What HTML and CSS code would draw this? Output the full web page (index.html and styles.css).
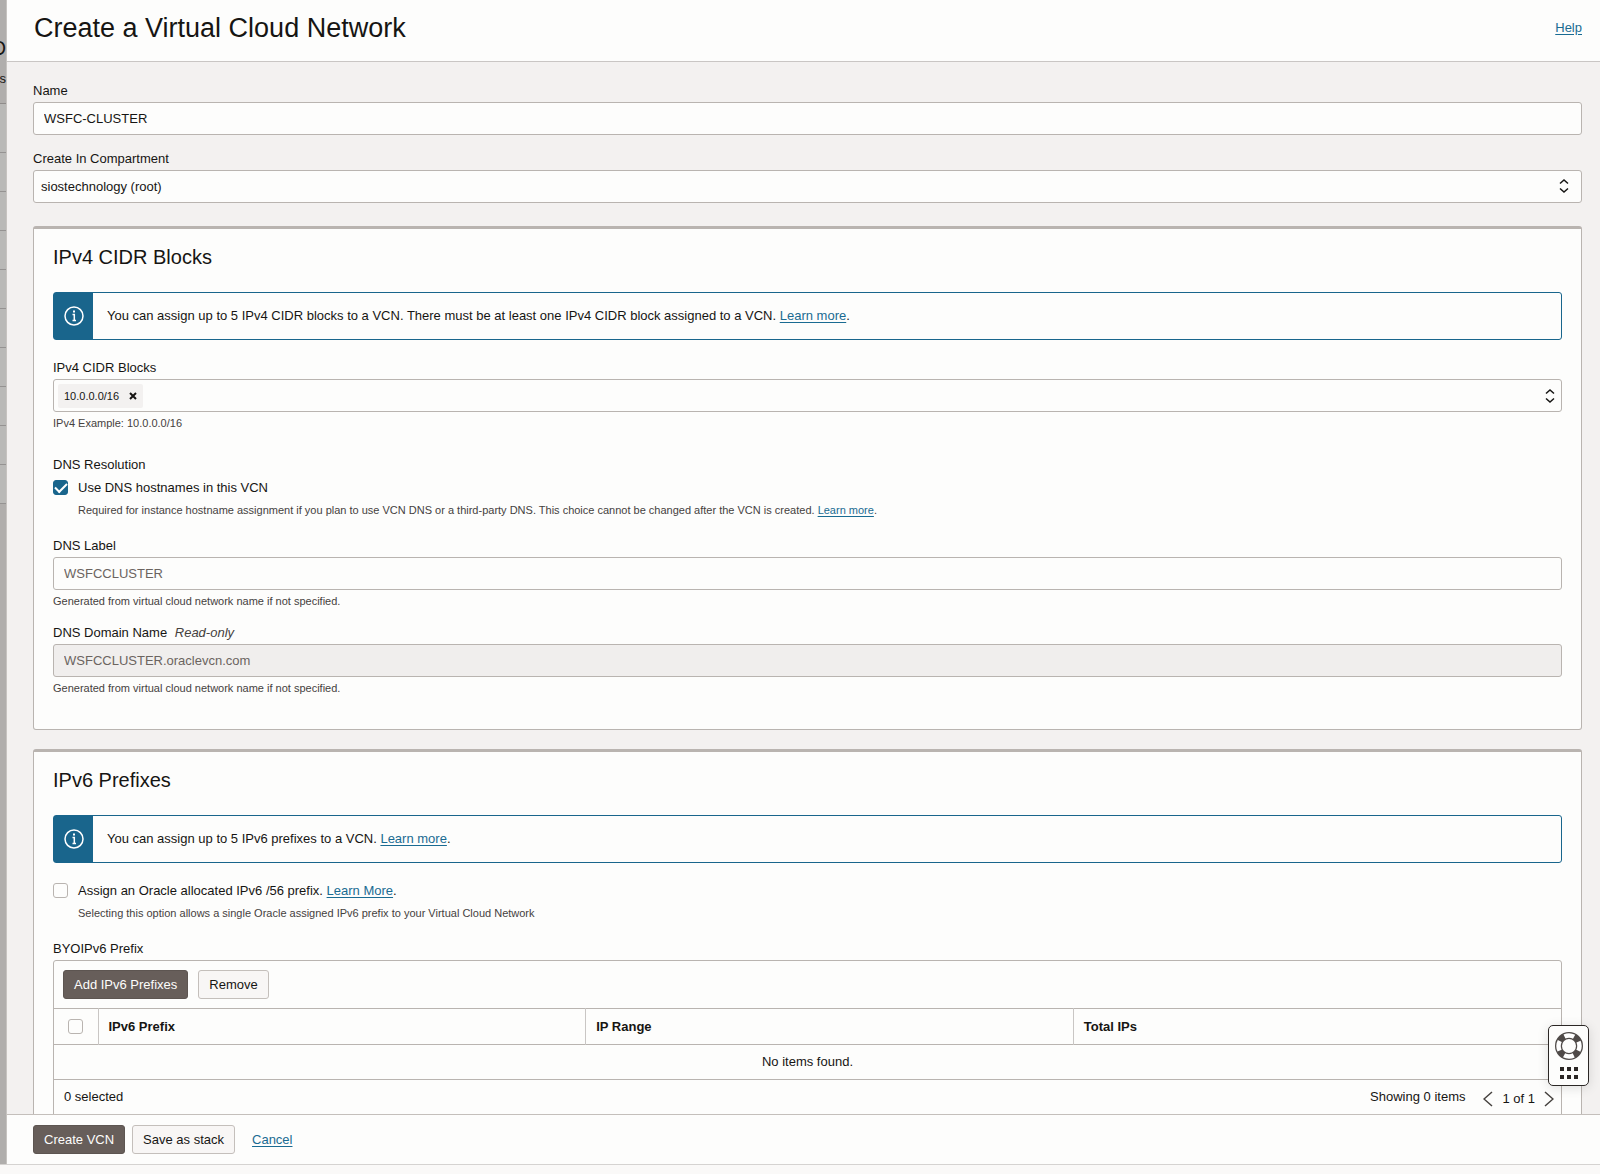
FILE: index.html
```html
<!DOCTYPE html>
<html lang="en">
<head>
  <meta charset="UTF-8">
  <meta name="viewport" content="width=device-width, initial-scale=1.0">
  <title>Create a Virtual Cloud Network</title>
  <link rel="stylesheet" href="styles.css">
</head>
<body>
  <div class="page">
    <div class="backdrop">
      <div class="backdrop-head">
        <span class="backdrop-title">O</span>
        <span class="backdrop-text">as</span>
      </div>
      <div class="backdrop-row tall"></div>
      <div class="backdrop-row"></div>
      <div class="backdrop-row"></div>
      <div class="backdrop-row"></div>
      <div class="backdrop-row"></div>
      <div class="backdrop-row"></div>
      <div class="backdrop-row"></div>
      <div class="backdrop-row"></div>
      <div class="backdrop-row"></div>
      <div class="backdrop-row"></div>
    </div>

    <div class="drawer">
      <header class="drawer-header">
        <h1>Create a Virtual Cloud Network</h1>
        <a href="#">Help</a>
      </header>

      <main class="drawer-body">
        <div class="field">
          <label for="name">Name</label>
          <input class="control" type="text" id="name" value="WSFC-CLUSTER">
        </div>
        <div class="field">
          <label for="compartment">Create In Compartment</label>
          <div class="select-wrap">
            <select class="control" id="compartment">
              <option>siostechnology (root)</option>
            </select>
            <svg class="arrows" viewBox="0 0 10 14"><path d="M1 4.500 5 1l4 3.500M1 9.500 5 13l4-3.500"/></svg>
          </div>
        </div>

        <section class="panel ipv4">
          <h2>IPv4 CIDR Blocks</h2>
          <div class="notice">
            <div class="notice-icon">
              <svg viewBox="0 0 20 20"><circle cx="10" cy="10" r="9"/><path d="M8.500 8.500H10.300V15M8.500 14.500h3.500"/><path class="dot" d="M9 4.500h2v2H9z"/></svg>
            </div>
            <p>You can assign up to 5 IPv4 CIDR blocks to a VCN. There must be at least one IPv4 CIDR block assigned to a VCN. <a href="#">Learn more</a>.</p>
          </div>

          <div class="field cidr">
            <label for="cidr">IPv4 CIDR Blocks</label>
            <div class="control tag-box">
              <span class="tag">10.0.0.0/16 <button class="tag-remove" aria-label="Remove 10.0.0.0/16"><svg viewBox="0 0 8 8"><path d="M1 1l6 6M7 1 1 7"/></svg></button></span>
              <input type="text" id="cidr">
              <svg class="arrows" viewBox="0 0 10 14"><path d="M1 4.500 5 1l4 3.500M1 9.500 5 13l4-3.500"/></svg>
            </div>
            <p class="hint">IPv4 Example: 10.0.0.0/16</p>
          </div>

          <div class="group">
            <div class="group-label">DNS Resolution</div>
            <div class="check">
              <input type="checkbox" id="dns" checked>
              <div>
                <label for="dns">Use DNS hostnames in this VCN</label>
                <p class="hint">Required for instance hostname assignment if you plan to use VCN DNS or a third-party DNS. This choice cannot be changed after the VCN is created. <a href="#">Learn more</a>.</p>
              </div>
            </div>
          </div>

          <div class="field">
            <label for="dns-label">DNS Label</label>
            <input class="control muted" type="text" id="dns-label" value="WSFCCLUSTER">
            <p class="hint">Generated from virtual cloud network name if not specified.</p>
          </div>
          <div class="field">
            <label for="dns-domain">DNS Domain Name <em>Read-only</em></label>
            <input class="control muted readonly" type="text" id="dns-domain" value="WSFCCLUSTER.oraclevcn.com" readonly>
            <p class="hint">Generated from virtual cloud network name if not specified.</p>
          </div>
        </section>

        <section class="panel">
          <h2>IPv6 Prefixes</h2>
          <div class="notice">
            <div class="notice-icon">
              <svg viewBox="0 0 20 20"><circle cx="10" cy="10" r="9"/><path d="M8.500 8.500H10.300V15M8.500 14.500h3.500"/><path class="dot" d="M9 4.500h2v2H9z"/></svg>
            </div>
            <p>You can assign up to 5 IPv6 prefixes to a VCN. <a href="#">Learn more</a>.</p>
          </div>
          <div class="check">
            <input type="checkbox" id="ipv6">
            <div>
              <label for="ipv6">Assign an Oracle allocated IPv6 /56 prefix. <a href="#">Learn More</a>.</label>
              <p class="hint">Selecting this option allows a single Oracle assigned IPv6 prefix to your Virtual Cloud Network</p>
            </div>
          </div>

          <div class="group-label">BYOIPv6 Prefix</div>
          <div class="table-box">
            <div class="toolbar">
              <button class="btn primary">Add IPv6 Prefixes</button>
              <button class="btn">Remove</button>
            </div>
            <table>
              <thead>
                <tr>
                  <th class="pick"><input type="checkbox" aria-label="Select all"></th>
                  <th>IPv6 Prefix</th>
                  <th>IP Range</th>
                  <th>Total IPs</th>
                </tr>
              </thead>
              <tbody>
                <tr>
                  <td colspan="4">No items found.</td>
                </tr>
              </tbody>
            </table>
            <div class="table-footer">
              <span>0 selected</span>
              <span class="showing">Showing 0 items</span>
              <div class="pager">
                <button aria-label="Previous page"><svg viewBox="0 0 10 16"><path d="M9 1 1 8l8 7"/></svg></button>
                <span>1 of 1</span>
                <button aria-label="Next page"><svg viewBox="0 0 10 16"><path d="M1 1l8 7-8 7"/></svg></button>
              </div>
            </div>
          </div>
        </section>
      </main>

      <footer class="drawer-footer">
        <button class="btn primary">Create VCN</button>
        <button class="btn">Save as stack</button>
        <a href="#">Cancel</a>
      </footer>
    </div>
  </div>
  <div class="page-bottom"></div>

  <button class="support" aria-label="Support">
    <svg class="ring" viewBox="0 0 28 28">
      <circle cx="14" cy="14" r="10.500" fill="none" stroke="#4f4a48" stroke-width="7"/>
      <circle cx="14" cy="14" r="10.500" fill="none" stroke="#fff" stroke-width="4.500" stroke-dasharray="10 6.500" stroke-dashoffset="5"/>
    </svg>
    <svg class="dots" viewBox="0 0 20 12"><path d="M1 0h4v4H1zM8 0h4v4H8zM15 0h4v4h-4zM1 8h4v4H1zM8 8h4v4H8zM15 8h4v4h-4z"/></svg>
  </button>
</body>
</html>
```
FILE: styles.css
```css
* {
  box-sizing: border-box;
}
body {
  margin: 0;
  height: 100vh;
  display: flex;
  flex-direction: column;
  overflow: hidden;
  background: #fdfdfc;
  color: #161513;
  font: 13px/16px "Liberation Sans", Arial, sans-serif;
}
h1, h2, p {
  margin: 0;
  font-weight: normal;
}
a {
  color: #1a6b92;
  text-underline-offset: 2px;
}
button, input, select {
  font: inherit;
  color: inherit;
}
.page {
  flex: 1;
  min-height: 0;
  display: flex;
}
.page-bottom {
  height: 10px;
  border-top: 1px solid #d5d3d1;
  background: #faf9f8;
}

/* page behind the drawer */
.backdrop {
  width: 7px;
  overflow: hidden;
  background: #b0aeac;
  border-right: 1px solid #c6c3c0;
}
.backdrop-head {
  height: 104px;
  padding-top: 33px;
  border-bottom: 1px solid #8f8c8a;
  display: flex;
  flex-direction: column;
  align-items: flex-end;
}
.backdrop-title {
  font-size: 20px;
  line-height: 30px;
}
.backdrop-text {
  line-height: 32px;
}
.backdrop-row {
  height: 39px;
  background: #b9b9b7;
  border-bottom: 1px solid #959392;
}
.backdrop-row.tall {
  height: 49px;
}

.drawer {
  flex: 1;
  min-width: 0;
  display: flex;
  flex-direction: column;
}
.drawer-header {
  height: 62px;
  padding: 0 18px 5px 27px;
  display: flex;
  flex-shrink: 0;
  align-items: center;
  justify-content: space-between;
  border-bottom: 1px solid #c9c6c4;
}
h1 {
  font-size: 27px;
  line-height: 32px;
}
.drawer-body {
  flex: 1;
  min-height: 0;
  overflow: hidden;
  padding: 21px 18px 0 26px;
  background: #f3f1f0;
}

.field {
  margin-bottom: 16px;
}
.field label {
  display: block;
  margin-bottom: 3px;
}
.field em {
  margin-left: 4px;
  color: #45413e;
}
.control {
  display: block;
  width: 100%;
  height: 33px;
  padding: 0 10px;
  border: 1px solid #b9b4b0;
  border-radius: 3px;
  background: #fdfdfc;
}
.control.muted {
  color: #6b6460;
}
.control.readonly {
  background: #f0eeed;
}
.select-wrap {
  position: relative;
}
select.control {
  appearance: none;
  padding: 0 7px;
}
.arrows {
  width: 10px;
  height: 14px;
  fill: none;
  stroke: #161513;
  stroke-width: 1.5;
}
.select-wrap .arrows {
  position: absolute;
  top: 9px;
  right: 13px;
}
.hint {
  margin-top: 3px;
  font-size: 11px;
  color: #45413e;
}

.panel {
  margin-top: 23px;
  padding: 16px 19px 0;
  border: 1px solid #b9b4b0;
  border-top-width: 3px;
  border-radius: 3px;
  background: #fdfdfc;
}
.panel + .panel {
  margin-top: 19px;
}
.ipv4 {
  padding-bottom: 17px;
}
h2 {
  font-size: 20px;
  line-height: 24px;
}
.notice {
  height: 48px;
  margin: 23px 0 16px;
  display: flex;
  align-items: center;
  border: 1px solid #19658c;
  border-radius: 3px;
}
.notice-icon {
  width: 39px;
  height: 100%;
  margin-right: 14px;
  display: flex;
  align-items: center;
  justify-content: center;
  background: #19658c;
}
.notice-icon svg {
  width: 20px;
  height: 20px;
  fill: none;
  stroke: #fff;
  stroke-width: 1.5;
}
.notice-icon .dot {
  fill: #fff;
  stroke: none;
}

.tag-box {
  display: flex;
  align-items: center;
  padding: 0 6px 0 4px;
}
.tag-box input {
  flex: 1;
  min-width: 0;
  border: 0;
  outline: 0;
  background: none;
}
.tag {
  height: 24px;
  padding: 0 6px;
  display: flex;
  align-items: center;
  gap: 10px;
  border-radius: 2px;
  background: #f3f1f0;
  font-size: 11px;
}
.tag-remove {
  padding: 0;
  border: 0;
  background: none;
  display: flex;
}
.tag-remove svg {
  width: 8px;
  height: 8px;
  stroke: #161513;
  stroke-width: 2;
}
.cidr {
  margin-top: 20px;
  margin-bottom: 26px;
}
.group-label {
  margin-bottom: 3px;
}

.check {
  display: flex;
  gap: 10px;
  padding-top: 1px;
  margin-bottom: 20px;
}
input[type="checkbox"] {
  appearance: none;
  flex-shrink: 0;
  width: 15px;
  height: 15px;
  margin: 3px 0 0;
  border: 1px solid #b9b4b0;
  border-radius: 3px;
  background: #fdfdfc;
}
input[type="checkbox"]:checked {
  border-color: #19658c;
  background: #19658c;
  display: flex;
  align-items: center;
  justify-content: center;
}
input[type="checkbox"]:checked::before {
  content: "";
  width: 10px;
  height: 5px;
  margin-bottom: 3px;
  border: solid #fff;
  border-width: 0 0 2px 2px;
  transform: rotate(-45deg);
}
.check label {
  display: block;
  line-height: 22px;
}

.btn {
  height: 29px;
  padding: 0 10px;
  border: 1px solid #c4bfbb;
  border-radius: 3px;
  background: #f8f6f5;
}
.btn.primary {
  border-color: #5d5551;
  background: #675e5a;
  color: #fdfdfc;
}
.table-box {
  border: 1px solid #b9b4b0;
  border-radius: 3px;
}
.toolbar {
  display: flex;
  gap: 10px;
  padding: 9px;
}
table {
  width: 100%;
  table-layout: fixed;
  border-collapse: collapse;
}
tr {
  height: 36px;
  border-top: 1px solid #b9b4b0;
  border-bottom: 1px solid #b9b4b0;
}
tbody tr {
  height: 35px;
}
th {
  padding: 0 10px;
  text-align: left;
}
th + th {
  border-left: 1px solid #c9c6c4;
}
.pick {
  width: 44px;
  padding: 0 14px;
}
.pick input {
  display: block;
  margin: 0;
}
td {
  padding: 0;
  text-align: center;
}
.table-footer {
  height: 48px;
  padding: 9px 7px 0 10px;
  display: flex;
  align-items: flex-start;
}
.showing {
  margin-left: auto;
}
.pager {
  display: flex;
  align-items: center;
  gap: 9px;
  margin: 2px 0 0 18px;
}
.pager button {
  padding: 0;
  border: 0;
  background: none;
  display: flex;
}
.pager svg {
  width: 10px;
  height: 16px;
  fill: none;
  stroke: #45413e;
  stroke-width: 1.5;
}

.drawer-footer {
  height: 50px;
  padding-left: 26px;
  display: flex;
  flex-shrink: 0;
  align-items: center;
  gap: 7px;
  border-top: 1px solid #c4bfbb;
}
.drawer-footer a {
  margin-left: 10px;
}

.support {
  position: fixed;
  right: 11px;
  bottom: 88px;
  width: 41px;
  height: 61px;
  padding: 0;
  display: flex;
  flex-direction: column;
  align-items: center;
  justify-content: center;
  gap: 7px;
  border: 1px solid #2b2725;
  border-radius: 5px;
  background: #fdfdfc;
  box-shadow: 0 2px 12px rgba(0, 0, 0, 0.12);
}
.ring {
  width: 28px;
  height: 28px;
}
.dots {
  width: 20px;
  height: 12px;
  fill: #2b2725;
}
```
